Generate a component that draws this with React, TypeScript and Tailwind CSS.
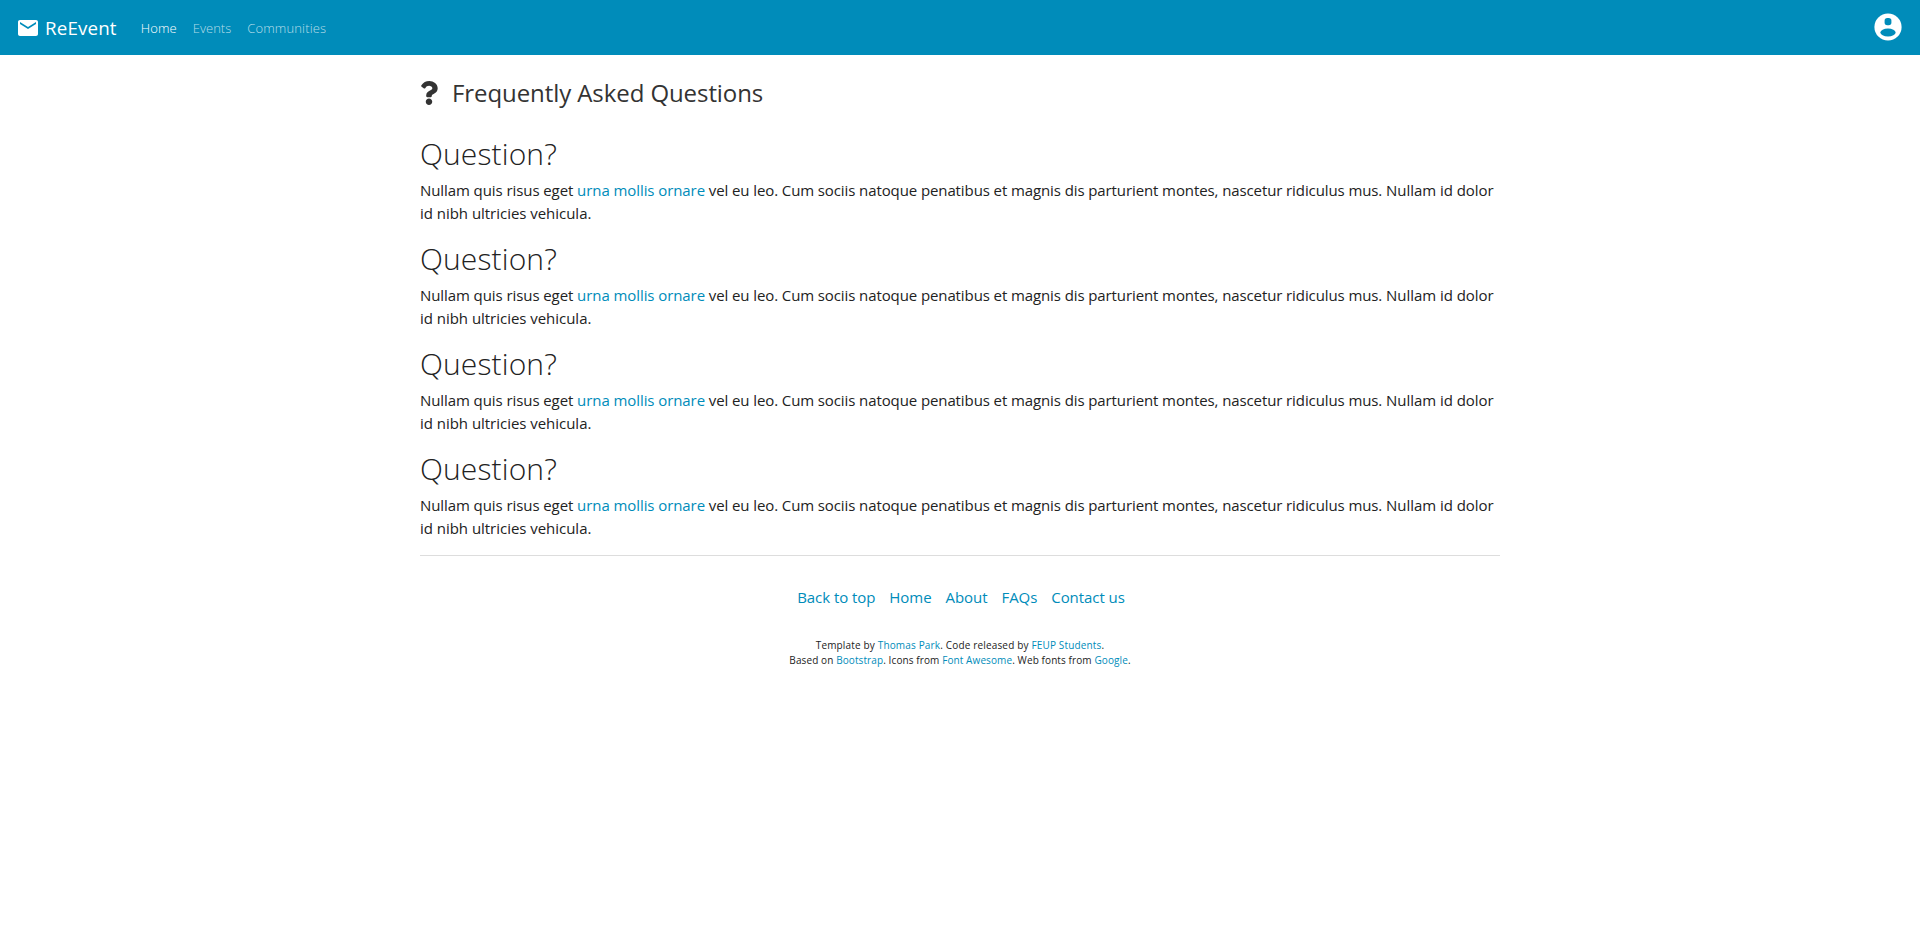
import React from "react";
import { MdEmail } from "react-icons/md";
import { FaQuestion } from "react-icons/fa";

const link = "text-[#008cba]";

const footerLinks = ["Back to top", "Home", "About", "FAQs", "Contact us"];

function AccountIcon() {
  return (
    <svg viewBox="0 0 28 28" className="mr-[2px] mb-px ml-auto h-7 w-7">
      <circle cx="14" cy="14" r="13.6" fill="#fff" />
      <rect x="10.6" y="5" width="6.8" height="7.2" rx="2.7" fill="#008cba" />
      <ellipse cx="14" cy="19.5" rx="7.6" ry="4" fill="#008cba" />
    </svg>
  );
}

function Question() {
  return (
    <section>
      <h2 className="mb-[7px] text-[30px] font-light leading-9 tracking-[0.12px]">Question?</h2>
      <p className="mb-[17px] leading-[22.5px] tracking-[-0.09px]">
        <span className="tracking-[-0.08px]">Nullam quis risus eget </span>
        <a className="tracking-[-0.08px] text-[#008cba]">urna mollis ornare</a>
        <span className="tracking-[-0.1px]"> vel eu leo. Cum sociis natoque penatibus et magnis dis parturient montes, nascetur ridiculus mus. </span>
        <span className="tracking-[-0.03px]">Nullam id dolor id nibh ultricies vehicula.</span>
      </p>
    </section>
  );
}

export default function App() {
  return (
    <div className="min-h-screen bg-white text-[15px] text-[#222] [font-family:'Open_Sans',sans-serif]">
      <header className="flex h-[55px] items-center bg-[#008cba] px-4 text-white">
        <a className="flex items-center text-[18.75px] tracking-[0.15px]">
          <MdEmail size={24} className="mr-[5px]" />
          <span className="pt-px">ReEvent</span>
        </a>
        <nav className="ml-4 flex pt-0.5 text-[13px] font-light">
          <a className="px-2 tracking-[0.15px]">Home</a>
          <a className="px-2 text-white/70">Events</a>
          <a className="px-2 tracking-[0.14px] text-white/70">Communities</a>
        </nav>
        <AccountIcon />
      </header>
      <main className="mx-auto w-[1080px]">
        <h1 className="mt-[22px] mb-[27px] flex h-8 items-center text-2xl tracking-[-0.08px] text-[#333]">
          <FaQuestion className="mr-[11px] -ml-[3px] mb-px" />
          Frequently Asked Questions
        </h1>
        <Question />
        <Question />
        <Question />
        <Question />
        <hr className="-mt-px border-[#ddd]" />
        <footer className="pt-[30px] text-center">
          <div className="flex justify-center gap-3.5 pl-[2px] tracking-[-0.06px]">
            {footerLinks.map((t) => (
              <a key={t} className={link}>{t}</a>
            ))}
          </div>
          <p className="mt-[29px] text-[10px] leading-[15px] tracking-[0.1px]">
            <span className="tracking-[0.16px]">
              Template by <a className={link}>Thomas Park</a>. Code released by <a className={link}>FEUP Students</a>.
            </span>
            <br />
            Based on <a className={link}>Bootstrap</a>. Icons from <a className={link}>Font Awesome</a>. Web fonts from <a className={link}>Google</a>.
          </p>
        </footer>
      </main>
    </div>
  );
}
